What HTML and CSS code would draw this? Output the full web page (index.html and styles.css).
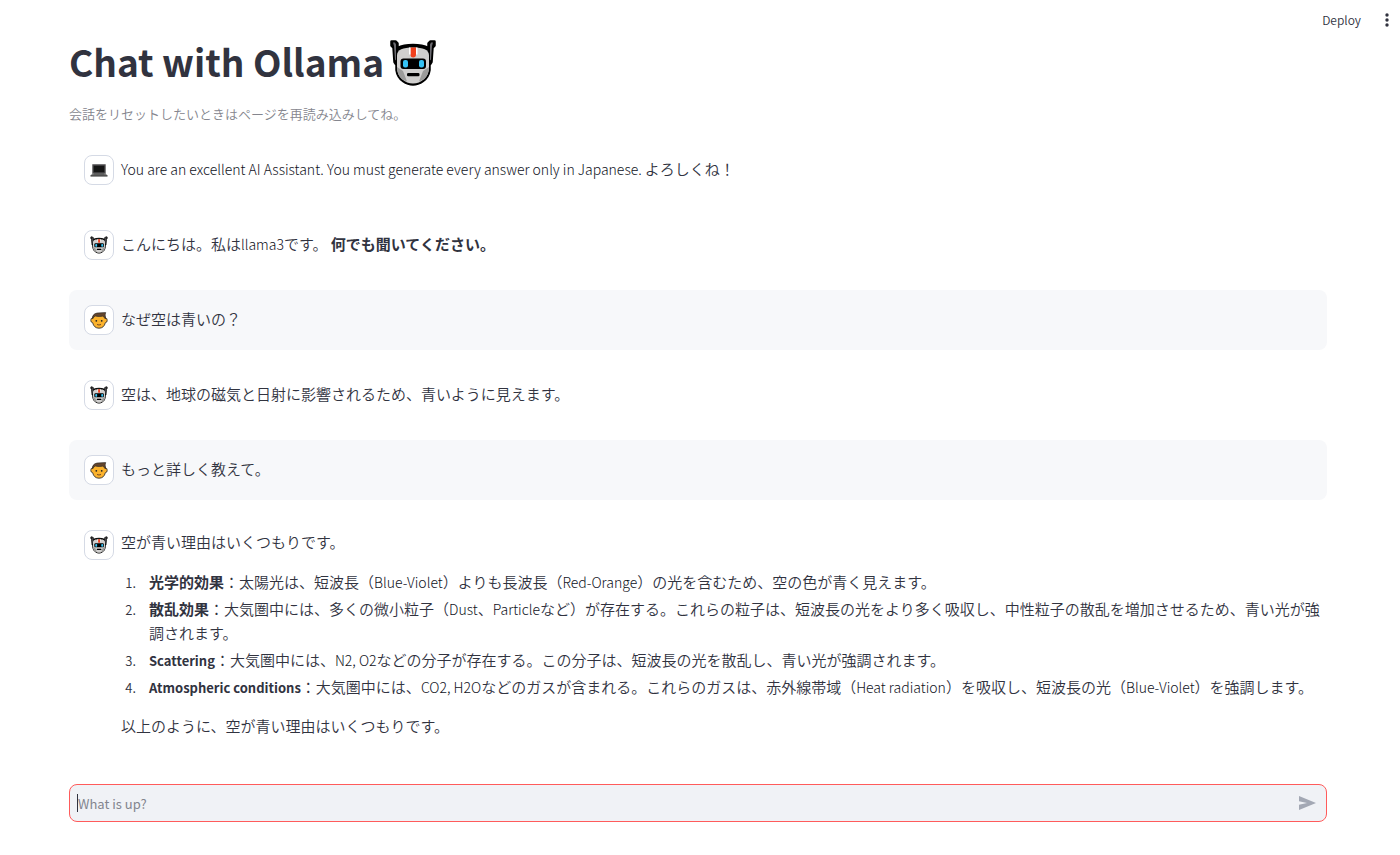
FILE: index.html
```html
<!DOCTYPE html>
<html lang="ja">
<head>
<meta charset="utf-8">
<meta name="viewport" content="width=device-width, initial-scale=1">
<title>Chat with Ollama</title>
<link rel="stylesheet" href="styles.css">
</head>
<body>
<svg class="sprite" aria-hidden="true">
  <symbol id="robot" viewBox="0 0 48 48">
    <path d="M2.500 2.500h4l2 2v4.500q6-3 15.500-3t15.500 3V4.500l2-2h4v4l-2 2-1 14.500-2 3v5q-1 7-6.500 11-5 3.500-10 3.500T14 42q-5.500-4-6.500-11v-5l-2-3-1-14.500-2-2z" fill="#000" stroke="#000" stroke-width="2.500" stroke-linejoin="round"/>
    <path d="M4 3.500h2l1 2v16l-1-1L5 7zM44 3.500h-2l-1 2v16l1-1 1-13.500z" fill="#6b6a70"/>
    <path d="M24 8.500c10 0 16 2 16 8v12c0 10-8 16-16 16S8 38.500 8 28.500v-12c0-6 6-8 16-8z" fill="#d0cfce"/>
    <path d="M8 28l6 4 4 10.500C11 40 8 35 8 28zM40 28l-6 4-4 10.500c7-2.500 10-7.500 10-14.500z" fill="#9b9b9a"/>
    <path d="M21.500 8.500h5.500v7q0 3-2.800 3t-2.700-3z" fill="#f1401d"/>
    <path d="M20 8.500h1.500v7h-1.500zM27 8.500h1.500v7H27z" fill="#fff"/>
    <rect x="11.500" y="19.500" width="25.500" height="10.500" rx="3" fill="#000"/>
    <rect x="14" y="21" width="5" height="7.500" rx="2" fill="#35c3f5"/>
    <rect x="30" y="21" width="5" height="7.500" rx="2" fill="#35c3f5"/>
    <rect x="18" y="34" width="12.500" height="3.200" rx="1.200" fill="#000"/>
  </symbol>
  <symbol id="laptop" viewBox="0 0 18 18">
    <path d="M3 4h12v8H3z" fill="#141414" stroke="#4b4a4c" stroke-width="1.400"/>
    <path d="M3 12h12l2.500 2.500H.5z" fill="#777"/>
    <path d="M4 12.600h10l.6.9H3.400z" fill="#444"/>
    <path d="M.5 14.300h17v1.200H.5z" fill="#222"/>
  </symbol>
  <symbol id="person" viewBox="0 0 18 18">
    <path d="M2.500 7Q.8 7 .8 9.300t1.800 2.300Q4 17.200 9 17.200t6.400-5.600q1.800 0 1.800-2.300T15.500 7Q15 3 9 3T2.500 7z" fill="#fbb22c" stroke="#3b332b" stroke-width=".9"/>
    <path d="M2.500 8Q2.300 2.800 7 2.100l8.700-.5Q14.700 3 15.500 8q-1.500-1.500-2.300-3Q9 6 5.500 5 3.500 5.500 2.500 8z" fill="#65452b" stroke="#302c29" stroke-width=".7"/>
    <circle cx="6.300" cy="9.800" r=".9" fill="#222"/><circle cx="11.700" cy="9.800" r=".9" fill="#222"/>
    <path d="M7 13.500q2 1 4 0" fill="none" stroke="#6a3d1c" stroke-width=".9"/>
  </symbol>
</svg>

<header class="toolbar">
  <button class="deploy" type="button">Deploy</button>
  <button class="menu" type="button" aria-label="Menu">
    <svg viewBox="0 0 4 14" aria-hidden="true"><circle cx="2" cy="2" r="1.700"/><circle cx="2" cy="7" r="1.700"/><circle cx="2" cy="12" r="1.700"/></svg>
  </button>
</header>

<main class="page">
  <h1 class="title">Chat with Ollama<svg class="title-icon" aria-hidden="true"><use href="#robot"/></svg></h1>
  <p class="caption">会話をリセットしたいときはページを再読み込みしてね。</p>

  <section class="chat">
    <article class="message">
      <span class="avatar"><svg aria-hidden="true"><use href="#laptop"/></svg></span>
      <div class="content"><p><span class="en">You are an excellent AI Assistant. You must generate every answer only in Japanese. </span>よろしくね！</p></div>
    </article>
    <article class="message">
      <span class="avatar"><svg aria-hidden="true"><use href="#robot"/></svg></span>
      <div class="content"><p>こんにちは。私は<span class="en">llama3</span>です。 <strong>何でも聞いてください。</strong></p></div>
    </article>
    <article class="message user">
      <span class="avatar"><svg aria-hidden="true"><use href="#person"/></svg></span>
      <div class="content"><p>なぜ空は青いの？</p></div>
    </article>
    <article class="message">
      <span class="avatar"><svg aria-hidden="true"><use href="#robot"/></svg></span>
      <div class="content"><p>空は、地球の磁気と日射に影響されるため、青いように見えます。</p></div>
    </article>
    <article class="message user">
      <span class="avatar"><svg aria-hidden="true"><use href="#person"/></svg></span>
      <div class="content"><p>もっと詳しく教えて。</p></div>
    </article>
    <article class="message long">
      <span class="avatar"><svg aria-hidden="true"><use href="#robot"/></svg></span>
      <div class="content">
        <p>空が青い理由はいくつもりです。</p>
        <ol class="reasons">
          <li><strong>光学的効果</strong>：太陽光は、短波長（<span class="en">Blue-Violet</span>）よりも長波長（<span class="en">Red-Orange</span>）の光を含むため、空の色が青く見えます。</li>
          <li><strong>散乱効果</strong>：大気圏中には、多くの微小粒子（<span class="en">Dust</span>、<span class="en">Particle</span>など）が存在する。これらの粒子は、短波長の光をより多く吸収し、中性粒子の散乱を増加させるため、青い光が強調されます。</li>
          <li><strong class="en">Scattering</strong>：大気圏中には、<span class="en">N2, O2</span>などの分子が存在する。この分子は、短波長の光を散乱し、青い光が強調されます。</li>
          <li><strong class="en">Atmospheric conditions</strong>：大気圏中には、<span class="en">CO2, H2O</span>などのガスが含まれる。これらのガスは、赤外線帯域（<span class="en">Heat radiation</span>）を吸収し、短波長の光（<span class="en">Blue-Violet</span>）を強調します。</li>
        </ol>
        <p>以上のように、空が青い理由はいくつもりです。</p>
      </div>
    </article>
  </section>

  <form class="composer">
    <input class="prompt" type="text" placeholder="What is up?" aria-label="What is up?">
    <span class="caret"></span>
    <button class="send" type="button" aria-label="Send">
      <svg viewBox="0 0 18 16" aria-hidden="true"><path d="M1 1l17 7-17 7V9.800L9 8 1 6.200z"/></svg>
    </button>
  </form>
</main>
</body>
</html>
```
FILE: styles.css
```css
* { box-sizing: border-box; }
body {
  margin: 0;
  background: #fff;
  color: #31333f;
  font-family: "Noto Sans CJK JP", sans-serif;
  font-size: 15px;
  font-weight: 350;
  line-height: 24px;
}
p, h1, ol { margin: 0; }
button { border: 0; padding: 0; background: none; color: inherit; font: inherit; }
.sprite { position: absolute; width: 0; height: 0; }
.toolbar {
  display: flex;
  justify-content: flex-end;
  align-items: center;
  gap: 24px;
  height: 39px;
  padding-right: 11px;
}
.deploy { font-size: 12px; }
.menu { display: flex; }
.menu svg { width: 4px; height: 14px; fill: #31333f; }
.page { padding: 0 73px 33px 69px; }
.title {
  display: flex;
  align-items: flex-start;
  gap: 5px;
  font-size: 37px;
  font-weight: 700;
  line-height: 44px;
}
.title-icon { width: 48px; height: 48px; }
.caption { margin-top: 15px; color: #85868e; font-size: 13px; }
.chat {
  display: flex;
  flex-direction: column;
  gap: 15px;
  padding-top: 14px;
}
.message {
  display: flex;
  align-items: flex-start;
  gap: 7px;
  padding: 15px 0 15px 15px;
  border-radius: 8px;
}
.user { background: #f7f8fa; }
.avatar {
  display: flex;
  flex: none;
  align-items: center;
  justify-content: center;
  width: 30px;
  height: 30px;
  border: 1px solid #d5dae5;
  border-radius: 8px;
  background: #fff;
}
.avatar svg { width: 18px; height: 18px; }
.content { flex: 1; padding-top: 2px; }
.long .content { padding-top: 0; }
.en { color: #10121c; font-size: 14px; font-weight: 300; line-height: 16px; }
strong { font-weight: 700; }
strong.en { color: #31333f; font-size: 13px; font-weight: 700; }
.reasons {
  display: flex;
  flex-direction: column;
  gap: 3px;
  margin: 16px 0 15px;
  padding-left: 28px;
}
.reasons li::marker { content: counter(list-item) ".\2003"; font-size: 13px; }
.composer { position: relative; margin-top: 31px; }
.prompt {
  display: block;
  width: 100%;
  height: 38px;
  padding: 0 48px 0 8px;
  border: 1px solid #ff5b5b;
  border-radius: 8px;
  outline: 0;
  background: #f0f2f6;
  color: #31333f;
  font: 400 13px "Noto Sans CJK JP", sans-serif;
}
.prompt::placeholder { color: #83858e; opacity: 1; }
.caret {
  position: absolute;
  top: 10px;
  left: 8px;
  width: 1px;
  height: 18px;
  background: #31333f;
}
.send {
  position: absolute;
  top: 11px;
  right: 11px;
  display: flex;
}
.send svg { width: 18px; height: 16px; fill: #a3a8b4; }
```
